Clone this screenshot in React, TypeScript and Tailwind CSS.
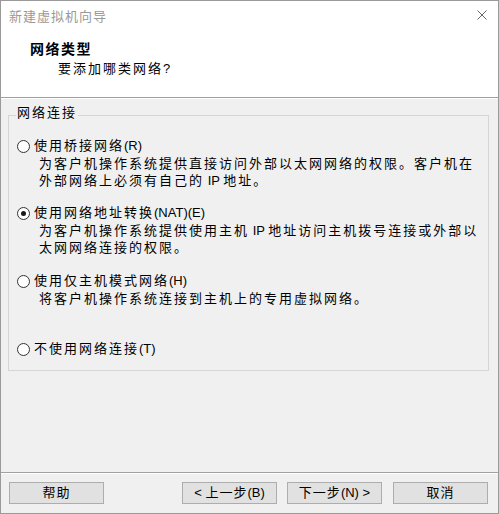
import React from "react";

const CJK_RE = /([\u2e80-\u9fff\u3000-\u303f\uff00-\uffef]+)/;

function T({ s, cjk }: { s: string; cjk: string }) {
  const parts = s.split(CJK_RE).filter((p) => p.length > 0);
  return (
    <>
      {parts.map((p, i) =>
        CJK_RE.test(p) ? (
          <span key={i} className={cjk}>
            {p}
          </span>
        ) : (
          <span key={i} className="whitespace-pre">
            {p}
          </span>
        )
      )}
    </>
  );
}

function Radio({ checked }: { checked?: boolean }) {
  return (
    <div className="w-[13px] h-[13px] rounded-full border border-[#333333] bg-white flex items-center justify-center shrink-0">
      {checked ? <div className="w-[5px] h-[5px] rounded-full bg-[#1a1a1a]" /> : null}
    </div>
  );
}

function Option({
  label,
  lines,
  checked,
  className,
}: {
  label: string;
  lines: string[];
  checked?: boolean;
  className?: string;
}) {
  return (
    <div className={"flex flex-col " + (className ?? "")}>
      <div className="flex items-center gap-[4px] h-[18px]">
        <Radio checked={checked} />
        <div className="leading-[18px] whitespace-nowrap">
          <T s={label} cjk="tracking-[2px]" />
        </div>
      </div>
      {lines.map((l, i) => (
        <div key={i} className="pl-[22px] leading-[17px] whitespace-nowrap">
          <T s={l} cjk="tracking-[2px]" />
        </div>
      ))}
    </div>
  );
}

function Btn({ label }: { label: string }) {
  return (
    <div className="w-[95px] h-[22px] border border-[#adadad] bg-[#e1e1e1] flex items-center justify-center leading-[18px] whitespace-nowrap">
      <T s={label} cjk="tracking-[1px]" />
    </div>
  );
}

export default function App() {
  return (
    <div className="w-[499px] h-[514px] bg-[#f0f0f0] border border-[#9a9a9a] flex flex-col text-[13px] text-black font-['Liberation_Sans','Noto_Sans_CJK_SC',sans-serif] overflow-hidden">
      <div className="bg-white h-[97px] border-b border-[#a0a0a0] flex flex-col shrink-0">
        <div className="h-[32px] flex items-center justify-between pl-[8px] pr-[11px]">
          <div className="text-[#999999] leading-[18px]">
            <T s="新建虚拟机向导" cjk="tracking-[1px]" />
          </div>
          <svg width="10" height="10" viewBox="0 0 10 10" className="-mt-[4px]">
            <path d="M0.5 0.5 L9.5 9.5 M9.5 0.5 L0.5 9.5" stroke="#666666" strokeWidth="1" fill="none" />
          </svg>
        </div>
        <div className="pl-[29px] pt-[6px] leading-[20px] font-bold text-[14px]">
          <T s="网络类型" cjk="tracking-[1.5px]" />
        </div>
        <div className="pl-[57px] leading-[20px]">
          <T s="要添加哪类网络?" cjk="tracking-[2px]" />
        </div>
      </div>
      <div className="h-px bg-white shrink-0" />
      <div className="flex-1 pt-[16px] pl-[7px]">
        <div className="relative w-[481px] h-[256px] border border-[#d5d5d5] pt-[21px] pl-[8px]">
          <div className="absolute left-[7px] -top-[12px] px-[1px] bg-[#f0f0f0] leading-[18px]">
            <T s="网络连接" cjk="tracking-[2px]" />
          </div>
          <Option
            label="使用桥接网络(R)"
            lines={[
              "为客户机操作系统提供直接访问外部以太网网络的权限。客户机在",
              "外部网络上必须有自己的 IP 地址。",
            ]}
          />
          <Option
            className="mt-[15px]"
            checked
            label="使用网络地址转换(NAT)(E)"
            lines={[
              "为客户机操作系统提供使用主机 IP 地址访问主机拨号连接或外部以",
              "太网网络连接的权限。",
            ]}
          />
          <Option
            className="mt-[16px]"
            label="使用仅主机模式网络(H)"
            lines={["将客户机操作系统连接到主机上的专用虚拟网络。"]}
          />
          <Option className="mt-[33px]" label="不使用网络连接(T)" lines={[]} />
        </div>
      </div>
      <div className="h-[41px] border-t border-[#a0a0a0] shadow-[inset_0_1px_0_#ffffff] flex items-start justify-between pt-[9px] pl-[8px] pr-[10px] shrink-0">
        <Btn label="帮助" />
        <div className="flex">
          <Btn label="< 上一步(B)" />
          <div className="ml-[10px]">
            <Btn label="下一步(N) >" />
          </div>
          <div className="ml-[11px]">
            <Btn label="取消" />
          </div>
        </div>
      </div>
    </div>
  );
}
